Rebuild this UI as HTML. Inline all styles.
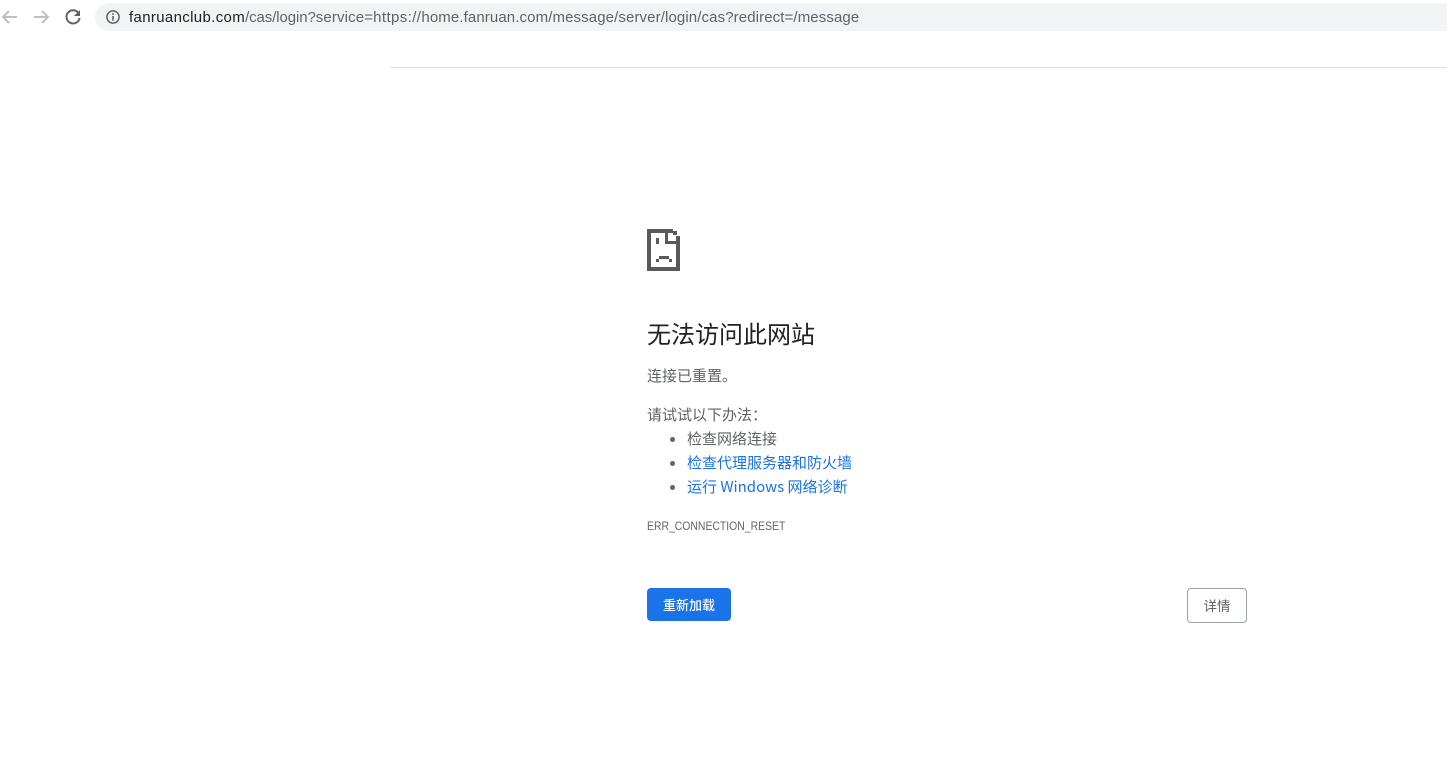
<!DOCTYPE html>
<html lang="zh-CN">
<head>
<meta charset="utf-8">
<title>无法访问此网站</title>
<style>
html,body{margin:0;padding:0;background:#fff;width:1447px;height:767px;overflow:hidden}
body{position:relative;font-family:"Liberation Sans","Noto Sans CJK SC",sans-serif;color:#5f6368}
.a{position:absolute;white-space:nowrap}
.cjk{font-family:"Noto Sans CJK SC","Liberation Sans",sans-serif}
.t{font-size:15px;line-height:20px}
.link{color:#1a73e8}
.dot{position:absolute;width:5px;height:5px;border-radius:50%;background:#5f6368}
</style>
</head>
<body>
<svg class="a" style="left:0;top:6px" width="84" height="22" viewBox="0 0 84 22" fill="none">
  <path d="M17 11H3M9 5l-6 6 6 6" stroke="#bdbfc2" stroke-width="2"/>
  <path d="M34 11h14M42 5l6 6-6 6" stroke="#bdbfc2" stroke-width="2"/>
  <path d="M78.6 7.2A6.6 6.6 0 1 0 79.6 12" stroke="#5f6368" stroke-width="2"/>
  <path d="M80 4v6h-6z" fill="#5f6368"/>
</svg>
<div class="a" style="left:95px;top:3px;width:1352px;height:28px;background:#f1f3f4;border-radius:14px 0 0 14px"></div>
<svg class="a" style="left:106px;top:10px" width="14" height="14" viewBox="0 0 14 14" fill="none">
  <circle cx="7" cy="7" r="6.1" stroke="#5f6368" stroke-width="1.5"/>
  <rect x="6.2" y="6" width="1.6" height="4.6" fill="#5f6368"/>
  <rect x="6.2" y="3.3" width="1.6" height="1.7" fill="#5f6368"/>
</svg>
<div class="a" style="left:129px;top:7px;font-size:15px;letter-spacing:.11px;line-height:21px;color:#5f6368"><span style="color:#202124;letter-spacing:.345px">fanruanclub.com</span><span style="letter-spacing:-.1px">/cas/login?</span><span style="letter-spacing:.145px">service=</span><span style="letter-spacing:.4px">https://</span>home.fanruan.com/message/server/login/cas?redirect=/message</div>
<div class="a" style="left:390px;top:67px;width:1057px;height:1px;background:#dadce0"></div>

<svg class="a" style="left:647px;top:229px" width="33" height="42" viewBox="0 0 33 42" fill="#58595b" shape-rendering="crispEdges">
  <rect x="0" y="0" width="4" height="42"/>
  <rect x="0" y="0" width="26" height="4"/>
  <rect x="0" y="38" width="33" height="4"/>
  <rect x="29" y="7" width="4" height="35"/>
  <rect x="26" y="2" width="4" height="4"/>
  <rect x="18" y="4" width="3" height="11"/>
  <rect x="18" y="12" width="15" height="3"/>
  <rect x="9" y="9" width="3" height="6"/>
  <rect x="12" y="27" width="10" height="3"/>
  <rect x="9" y="30" width="3" height="3"/>
  <rect x="22" y="30" width="3" height="3"/>
</svg>

<div class="a cjk" style="left:647px;top:316px;font-size:24px;line-height:34px;color:#202124">无法访问此网站</div>
<div class="a cjk t" style="left:647px;top:366px">连接已重置。</div>
<div class="a cjk t" style="left:647px;top:405px">请试试以下办法：</div>
<div class="dot" style="left:670px;top:437px"></div>
<div class="a cjk t" style="left:687px;top:429px">检查网络连接</div>
<div class="dot" style="left:670px;top:461px"></div>
<div class="a cjk t link" style="left:687px;top:453px">检查代理服务器和防火墙</div>
<div class="dot" style="left:670px;top:485px"></div>
<div class="a cjk t link" style="left:687px;top:477px">运行 Windows 网络诊断</div>
<div class="a" style="left:647px;top:518px;font-size:12px;line-height:16px;color:#5f6368;transform:scaleX(.868);transform-origin:0 0">ERR_CONNECTION_RESET</div>

<div class="a cjk" style="left:647px;top:588px;width:84px;height:33px;background:#1a73e8;border-radius:4px;color:#fff;font-size:13px;line-height:33px;text-align:center;font-weight:500">重新加载</div>
<div class="a cjk" style="left:1187px;top:588px;width:58px;height:33px;border:1px solid #9aa0a6;border-radius:4px;color:#5f6368;font-size:13.5px;line-height:33px;text-align:center">详情</div>
</body>
</html>
